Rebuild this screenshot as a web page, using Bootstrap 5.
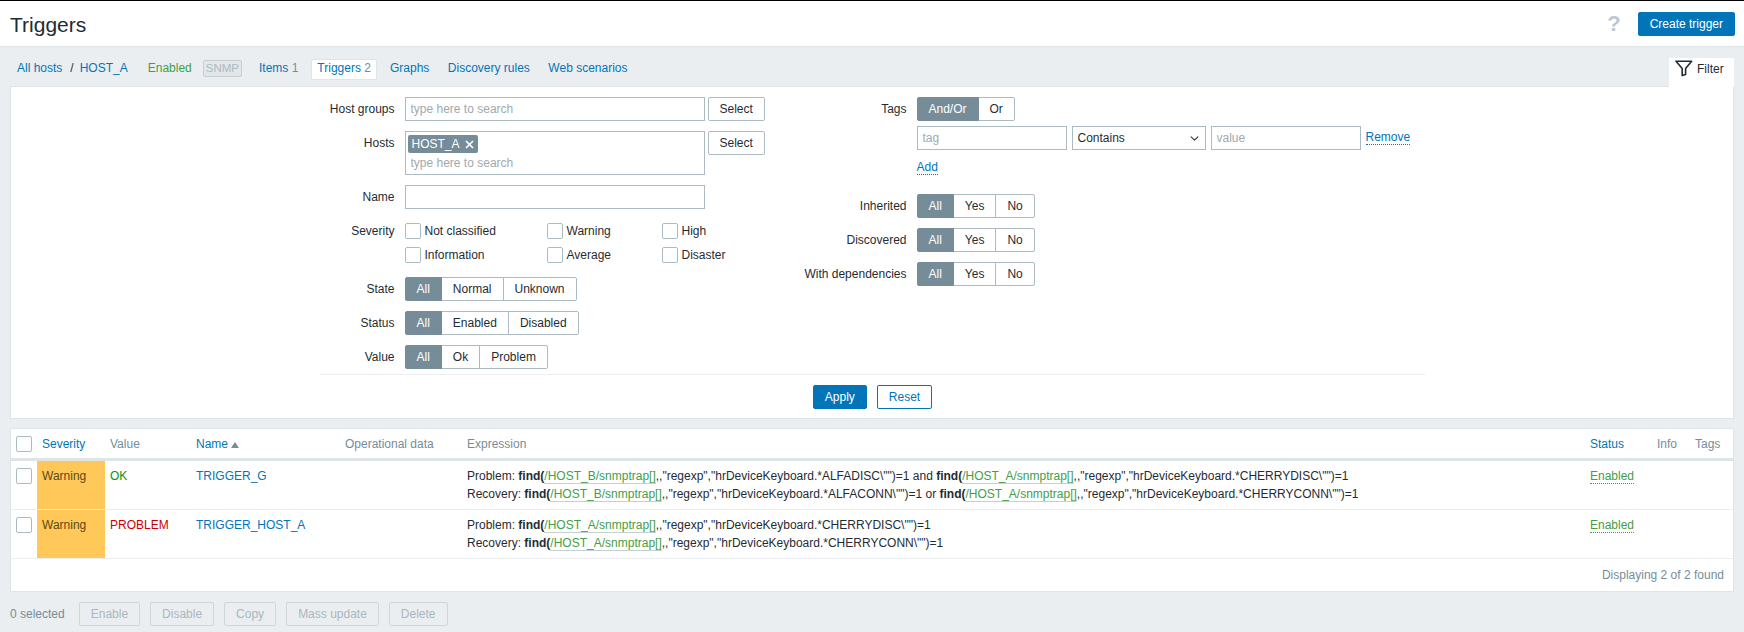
<!DOCTYPE html>
<html lang="en">
<head>
<meta charset="utf-8">
<title>Triggers</title>
<link rel="stylesheet" href="https://cdn.jsdelivr.net/npm/bootstrap@5.3.0/dist/css/bootstrap.min.css">
<style>
:root{--zb-text:#1f2c33;--zb-blue:#0275b8;--zb-grey:#768d99;--zb-line:#dfe4e7;--zb-field:#acbbc2;--zb-green:#429e47;}
html,body{height:100%;}
body{background:#ebeef0;color:var(--zb-text);font:12px/14px "Liberation Sans",Arial,sans-serif;overflow:hidden;}
a{color:var(--zb-blue);text-decoration:none;}
.top-head{height:47px;background:#fff;border-top:1px solid #000;border-bottom:1px solid var(--zb-line);padding:1px 9px 0 10px;}
.top-head h1{font-size:21px;line-height:24px;font-weight:400;margin:1px 0 0;}
.help-mark{color:#bcc8ce;font-size:22px;font-weight:700;line-height:24px;margin-right:17px;}
.zb-btn{height:24px;padding:0 11px;font-size:12px;line-height:22px;border-radius:2px;border:1px solid var(--zb-blue);}
.zb-primary{background:var(--zb-blue);color:#fff;}
.zb-primary:hover{background:#0275b8;color:#fff;border-color:#0275b8;}
.zb-outline{background:#fff;color:var(--zb-blue);}
.zb-plain{background:#fff;color:var(--zb-text);border-color:var(--zb-field);padding:0 11px;}
.zb-off,.zb-off:disabled{background:#ebeef0;color:#a9b8bf;border-color:#cfd7db;opacity:1;padding:0 11px;}
.host-nav{height:39px;padding:3px 10px 0 7px;}
.host-nav .crumb{padding:0 0 0 10px;}
.host-nav .slash{margin:0 6px 0 8px;}
.host-nav .host-state{color:var(--zb-green);margin-left:4px;}
.host-nav .count{color:var(--zb-grey);}
.host-nav .tab-on{background:#fff;border:1px solid var(--zb-line);border-radius:2px;padding:2px 5px 4px;margin:2px 13px 0 13px;height:21px;line-height:13px;}
.host-nav .plainlink{margin-right:18.5px;}
.snmp-tag{border:1px solid #c4ced3;background:#e3e7e9;color:#acbbc2;border-radius:2px;height:17px;line-height:15px;padding:0 2px;margin:0 17px 0 11px;font-size:11.5px;}
.filter-tab{align-self:flex-end;background:#fff;height:29px;width:65px;padding:0 0 8px 6px;gap:4px;margin-bottom:-1px;position:relative;z-index:1;margin-left:auto;}
.filter-panel{background:#fff;margin:0 10px;border:1px solid var(--zb-line);height:333px;padding:10px 0 0;}
.filter-inner{width:1105px;margin:0 auto;}
.filter-cols{display:grid;grid-template-columns:475px 1fr;height:277px;}
.f-row{display:flex;gap:10px;margin-bottom:10px;min-height:24px;}
.f-label{flex:none;text-align:right;line-height:24px;}
.left-col .f-label{width:75px;}
.right-col .f-label{width:112px;}
.f-input.form-control,.f-input.form-select{height:24px;min-height:0;padding:0 5px;font-size:12px;line-height:22px;border:1px solid var(--zb-field);border-radius:0;color:var(--zb-text);box-shadow:none;}
.f-input::placeholder,.ms-box input::placeholder{color:#9fa9ae;opacity:1;}
.w-300{width:300px;}
.w-150{width:150px;}
.f-input.w-134{width:134px;background-position:right 5px center;background-size:11px 9px;}
.ms-box{width:300px;height:44px;border:1px solid var(--zb-field);padding:2px;}
.ms-chip{display:inline-flex;align-items:center;gap:5px;height:18px;background:var(--zb-grey);color:#fff;border-radius:2px;padding:0 4px;margin-top:1px;}
.ms-box input{display:block;border:0;outline:0;padding:0 3px;margin-top:1px;height:18px;width:280px;font-size:12px;}
.pick-btn{margin-left:-7px;}
.sev-grid{display:grid;grid-template-columns:142px 115px 80px;grid-auto-rows:24px;height:48px;}
.sev-item{display:flex;align-items:center;gap:4px;}
.form-check-input.zb-check{width:16px;height:16px;margin:0;border:1px solid var(--zb-field);border-radius:2px;flex:none;}
.form-check-input.zb-check.row-check{margin-top:1px;}
.btn-group .seg{height:24px;padding:0 11px;font-size:12px;line-height:22px;border:1px solid var(--zb-field);background:#fff;color:var(--zb-text);border-radius:2px;flex:none;}
.btn-group .seg.active{background:var(--zb-grey);border-color:var(--zb-grey);color:#fff;}
.tag-line{display:flex;gap:5px;align-items:center;margin-top:5px;}
.dot-link{border-bottom:1px dotted var(--zb-blue);line-height:13px;}
.add-line{height:24px;display:flex;align-items:center;margin-top:6px;margin-bottom:14px;}
.apply-bar{border-top:1px solid #ebeef0;height:45px;gap:10px;padding:0 0 1px 1px;}
.list-panel{margin:9px 10px 0;background:#fff;border:1px solid var(--zb-line);height:164px;}
.zb-table{table-layout:fixed;width:100%;margin:0;font-size:12px;color:var(--zb-text);}
.zb-table th{height:30px;padding:1px 5px 0;border-bottom:3px solid var(--zb-line);font-weight:400;color:var(--zb-grey);vertical-align:middle;}
.zb-table td{padding:6px 5px 6px;border-bottom:1px solid #ebeef0;line-height:18px;vertical-align:top;height:49px;}
.zb-table td.cell-warn{background:#ffc859;color:#5c4a10;box-shadow:none;--bs-table-accent-bg:#ffc859;}
.sort-up{display:inline-block;width:0;height:0;border-left:4px solid transparent;border-right:4px solid transparent;border-bottom:6px solid var(--zb-grey);margin-left:3px;}
.val-ok{color:#009900;}
.val-bad{color:#cc0000;}
.host-ref{color:var(--zb-green);border-bottom:1px solid #c5d0d5;}
.enabled-link{color:var(--zb-green);border-bottom:1px dotted var(--zb-green);line-height:13px;display:inline-block;}
.list-foot{height:33px;padding-right:9px;color:var(--zb-grey);}
.action-bar{height:24px;margin:10px 10px 0;gap:10px;color:var(--zb-grey);}
.action-bar .picked{margin-right:4px;}
</style>
</head>
<body>
<header class="top-head d-flex align-items-center">
  <h1>Triggers</h1>
  <span class="help-mark ms-auto">?</span>
  <a href="#" class="btn zb-btn zb-primary">Create trigger</a>
</header>

<nav class="host-nav d-flex align-items-center">
  <a href="#" class="crumb">All hosts</a>
  <span class="slash">/</span>
  <a href="#" class="me-3">HOST_A</a>
  <span class="host-state">Enabled</span>
  <span class="snmp-tag">SNMP</span>
  <a href="#">Items <span class="count">1</span></a>
  <a href="#" class="tab-on">Triggers <span class="count">2</span></a>
  <a href="#" class="plainlink">Graphs</a>
  <a href="#" class="plainlink">Discovery rules</a>
  <a href="#">Web scenarios</a>
  <div class="filter-tab d-flex align-items-center">
    <svg width="18" height="17" viewBox="0 0 18 17" fill="none" stroke="#1f2c33" stroke-width="1.6" aria-hidden="true"><path d="M1 1.2h15.6L10.6 8.4v6.2l-3.4 1V8.4z" stroke-linejoin="round"/></svg>
    <span>Filter</span>
  </div>
</nav>

<section class="filter-panel">
  <div class="filter-inner">
    <div class="filter-cols">
      <div class="left-col">
        <div class="f-row">
          <div class="f-label">Host groups</div>
          <input class="form-control f-input w-300" placeholder="type here to search">
          <button class="btn zb-btn zb-plain pick-btn">Select</button>
        </div>
        <div class="f-row">
          <div class="f-label">Hosts</div>
          <div class="ms-box">
            <span class="ms-chip">HOST_A <svg width="9" height="9" viewBox="0 0 9 9" stroke="#fff" stroke-width="1.7" aria-hidden="true"><path d="M1 1l7 7M8 1L1 8"/></svg></span>
            <input placeholder="type here to search">
          </div>
          <button class="btn zb-btn zb-plain pick-btn">Select</button>
        </div>
        <div class="f-row">
          <div class="f-label">Name</div>
          <input class="form-control f-input w-300">
        </div>
        <div class="f-row">
          <div class="f-label">Severity</div>
          <div class="sev-grid">
            <label class="sev-item"><input type="checkbox" class="form-check-input zb-check">Not classified</label>
            <label class="sev-item"><input type="checkbox" class="form-check-input zb-check">Warning</label>
            <label class="sev-item"><input type="checkbox" class="form-check-input zb-check">High</label>
            <label class="sev-item"><input type="checkbox" class="form-check-input zb-check">Information</label>
            <label class="sev-item"><input type="checkbox" class="form-check-input zb-check">Average</label>
            <label class="sev-item"><input type="checkbox" class="form-check-input zb-check">Disaster</label>
          </div>
        </div>
        <div class="f-row">
          <div class="f-label">State</div>
          <div class="btn-group"><button class="btn seg active">All</button><button class="btn seg">Normal</button><button class="btn seg">Unknown</button></div>
        </div>
        <div class="f-row">
          <div class="f-label">Status</div>
          <div class="btn-group"><button class="btn seg active">All</button><button class="btn seg">Enabled</button><button class="btn seg">Disabled</button></div>
        </div>
        <div class="f-row">
          <div class="f-label">Value</div>
          <div class="btn-group"><button class="btn seg active">All</button><button class="btn seg">Ok</button><button class="btn seg">Problem</button></div>
        </div>
      </div>
      <div class="right-col">
        <div class="f-row mb-0">
          <div class="f-label">Tags</div>
          <div>
            <div class="btn-group"><button class="btn seg active">And/Or</button><button class="btn seg">Or</button></div>
            <div class="tag-line">
              <input class="form-control f-input w-150" placeholder="tag">
              <select class="form-select f-input w-134"><option>Contains</option></select>
              <input class="form-control f-input w-150" placeholder="value">
              <a href="#" class="dot-link">Remove</a>
            </div>
            <div class="add-line"><a href="#" class="dot-link">Add</a></div>
          </div>
        </div>
        <div class="f-row">
          <div class="f-label">Inherited</div>
          <div class="btn-group"><button class="btn seg active">All</button><button class="btn seg">Yes</button><button class="btn seg">No</button></div>
        </div>
        <div class="f-row">
          <div class="f-label">Discovered</div>
          <div class="btn-group"><button class="btn seg active">All</button><button class="btn seg">Yes</button><button class="btn seg">No</button></div>
        </div>
        <div class="f-row">
          <div class="f-label">With dependencies</div>
          <div class="btn-group"><button class="btn seg active">All</button><button class="btn seg">Yes</button><button class="btn seg">No</button></div>
        </div>
      </div>
    </div>
    <div class="apply-bar d-flex justify-content-center align-items-center">
      <button class="btn zb-btn zb-primary">Apply</button>
      <button class="btn zb-btn zb-outline">Reset</button>
    </div>
  </div>
</section>

<section class="list-panel">
  <table class="table zb-table">
    <colgroup><col style="width:26px"><col style="width:68px"><col style="width:86px"><col style="width:149px"><col style="width:122px"><col><col style="width:67px"><col style="width:38px"><col style="width:43px"></colgroup>
    <thead>
      <tr>
        <th><input type="checkbox" class="form-check-input zb-check d-block"></th>
        <th><a href="#">Severity</a></th>
        <th>Value</th>
        <th><a href="#">Name</a><span class="sort-up"></span></th>
        <th>Operational data</th>
        <th>Expression</th>
        <th><a href="#">Status</a></th>
        <th>Info</th>
        <th>Tags</th>
      </tr>
    </thead>
    <tbody>
      <tr>
        <td><input type="checkbox" class="form-check-input zb-check row-check d-block"></td>
        <td class="cell-warn">Warning</td>
        <td class="val-ok">OK</td>
        <td><a href="#">TRIGGER_G</a></td>
        <td></td>
        <td>
          <div>Problem: <b>find(</b><a href="#" class="host-ref">/HOST_B/snmptrap[]</a>,,"regexp","hrDeviceKeyboard.*ALFADISC\"")=1 and <b>find(</b><a href="#" class="host-ref">/HOST_A/snmptrap[]</a>,,"regexp","hrDeviceKeyboard.*CHERRYDISC\"")=1</div>
          <div>Recovery: <b>find(</b><a href="#" class="host-ref">/HOST_B/snmptrap[]</a>,,"regexp","hrDeviceKeyboard.*ALFACONN\"")=1 or <b>find(</b><a href="#" class="host-ref">/HOST_A/snmptrap[]</a>,,"regexp","hrDeviceKeyboard.*CHERRYCONN\"")=1</div>
        </td>
        <td><a href="#" class="enabled-link">Enabled</a></td>
        <td></td>
        <td></td>
      </tr>
      <tr>
        <td><input type="checkbox" class="form-check-input zb-check row-check d-block"></td>
        <td class="cell-warn">Warning</td>
        <td class="val-bad">PROBLEM</td>
        <td><a href="#">TRIGGER_HOST_A</a></td>
        <td></td>
        <td>
          <div>Problem: <b>find(</b><a href="#" class="host-ref">/HOST_A/snmptrap[]</a>,,"regexp","hrDeviceKeyboard.*CHERRYDISC\"")=1</div>
          <div>Recovery: <b>find(</b><a href="#" class="host-ref">/HOST_A/snmptrap[]</a>,,"regexp","hrDeviceKeyboard.*CHERRYCONN\"")=1</div>
        </td>
        <td><a href="#" class="enabled-link">Enabled</a></td>
        <td></td>
        <td></td>
      </tr>
    </tbody>
  </table>
  <div class="list-foot d-flex align-items-center justify-content-end">Displaying 2 of 2 found</div>
</section>

<div class="action-bar d-flex align-items-center">
  <span class="picked">0 selected</span>
  <button class="btn zb-btn zb-off" disabled>Enable</button>
  <button class="btn zb-btn zb-off" disabled>Disable</button>
  <button class="btn zb-btn zb-off" disabled>Copy</button>
  <button class="btn zb-btn zb-off" disabled>Mass update</button>
  <button class="btn zb-btn zb-off" disabled>Delete</button>
</div>
<script src="https://cdn.jsdelivr.net/npm/bootstrap@5.3.0/dist/js/bootstrap.bundle.min.js"></script>
</body>
</html>
